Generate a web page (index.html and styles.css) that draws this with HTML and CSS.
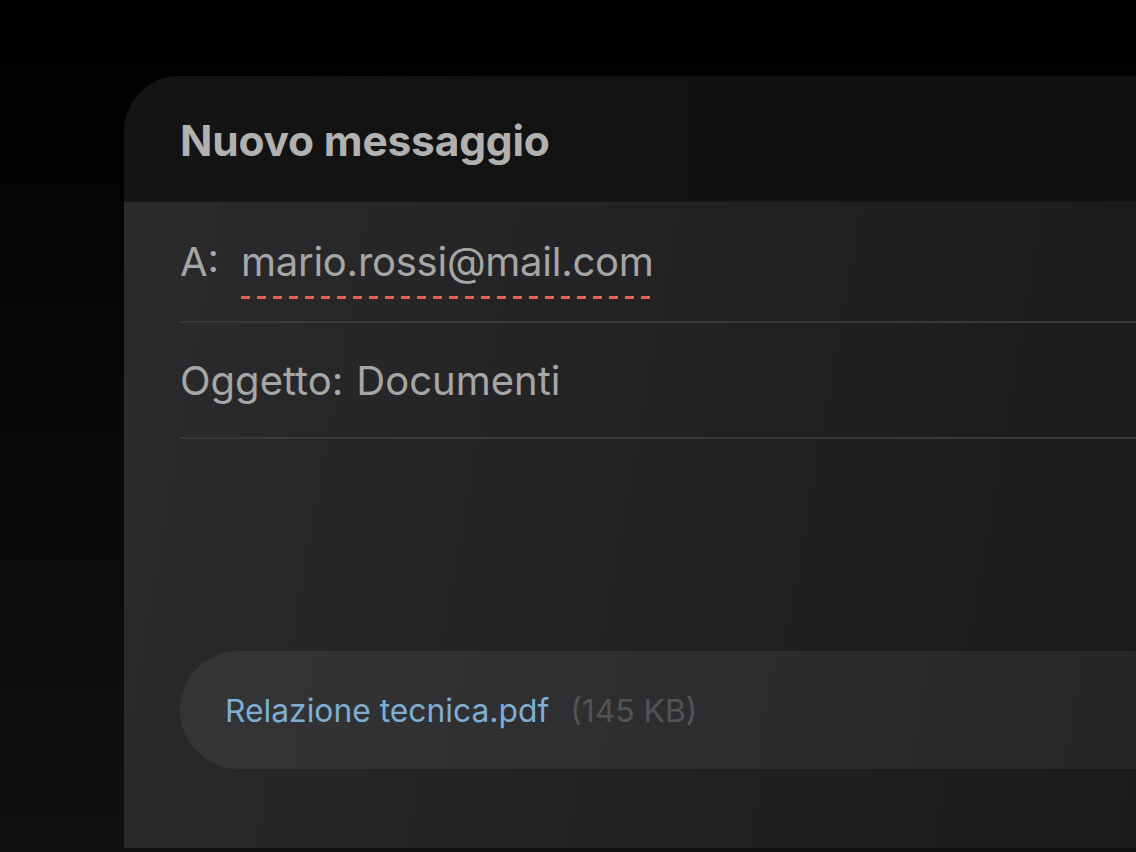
FILE: index.html
```html
<!DOCTYPE html>
<html lang="it">
<head>
<meta charset="utf-8">
<title>Nuovo messaggio</title>
<link rel="stylesheet" href="styles.css">
</head>
<body>
<div class="page">
  <div class="card">
    <div class="header">
      <h1 class="title">Nuovo messaggio</h1>
    </div>
    <div class="body">
      <div class="field field-to">
        <span class="label">A:</span>
        <span class="email">mario.rossi@mail.com</span>
      </div>
      <div class="field field-subject">
        <span class="label">Oggetto:</span>
        <span class="value">Documenti</span>
      </div>
      <div class="spacer"></div>
      <div class="attachment">
        <span class="file-name">Relazione tecnica.pdf</span>
        <span class="file-size">(145 KB)</span>
      </div>
    </div>
  </div>
</div>
</body>
</html>
```

FILE: styles.css
```css
html, body {
  margin: 0;
  padding: 0;
}

body {
  width: 1136px;
  height: 852px;
  overflow: hidden;
  background: linear-gradient(180deg, #000000 0%, #050505 30%, #101010 100%);
  font-family: Inter, "Noto Sans", sans-serif;
}

.page {
  padding: 76px 0 0 124px;
  height: 772px;
  display: flex;
}

.card {
  flex: 1;
  height: 772px;
  border-radius: 56px 0 0 0;
  overflow: hidden;
  display: flex;
  flex-direction: column;
}

.header {
  height: 126px;
  flex: none;
  background: linear-gradient(90deg, #141414 0%, #101010 100%);
  display: flex;
  align-items: center;
  padding-left: 56px;
  border-bottom: 1px solid #1a1a1a;
  box-sizing: border-box;
}

.title {
  margin: 0;
  font-size: 42.5px;
  font-weight: 700;
  color: #b1b1b1;
  letter-spacing: -0.2px;
  padding-top: 4px;
}

.body {
  flex: 1;
  padding-left: 56px;
  background: linear-gradient(100deg, #2b2b2d 0%, #232325 45%, #1b1b1b 100%);
  display: flex;
  flex-direction: column;
}

.field {
  display: flex;
  align-items: center;
  border-bottom: 2px solid #38383a;
  font-size: 40px;
  color: #a6a6a6;
}

.field-to {
  height: 119px;
}

.field-to .label {
  width: 61px;
}

.email {
  position: relative;
  letter-spacing: -0.25px;
}

.email::after {
  content: "";
  position: absolute;
  left: 0;
  right: -3px;
  bottom: -13px;
  height: 3px;
  background: repeating-linear-gradient(90deg, #e0625a 0 9px, transparent 9px 16px);
}

.field-subject {
  height: 114px;
}

.field-subject .label {
  margin-right: 13px;
}

.spacer {
  height: 212px;
  flex: none;
}

.attachment {
  height: 118px;
  border-radius: 59px 0 0 59px;
  background: linear-gradient(100deg, #343537 0%, #2c2c2e 60%, #262627 100%);
  display: flex;
  align-items: center;
  padding-left: 45px;
  font-size: 31.8px;
}

.file-name {
  color: #7eaed3;
}

.file-size {
  color: #535356;
  margin-left: 21px;
}
```
